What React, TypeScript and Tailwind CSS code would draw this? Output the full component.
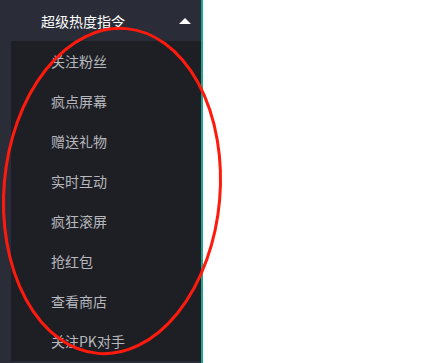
import React from 'react';

const items = ['关注粉丝', '疯点屏幕', '赠送礼物', '实时互动', '疯狂滚屏', '抢红包', '查看商店', '关注PK对手'];

const App: React.FC = () => {
  return (
    <div className="relative w-[444px] h-[363px] bg-white overflow-hidden font-['Noto_Sans_CJK_SC','Liberation_Sans',sans-serif]">
      <div className="flex h-full w-[203px]">
        {/* Sidebar */}
        <div className="flex flex-col w-[201px] h-full bg-[#2a2d37]">
          <div className="flex items-center justify-between h-[41px] pl-[41px] pr-[10px] shrink-0">
            <span className="text-[14px] text-white leading-none">超级热度指令</span>
            <svg width="12" height="6" viewBox="0 0 12 6" className="mr-0">
              <polygon points="6,0 12,6 0,6" fill="#ffffff" />
            </svg>
          </div>
          <div className="ml-[11px] bg-[#1e1f25] flex flex-col">
            {items.map((t) => (
              <div key={t} className="h-[40px] flex items-center pl-[40px] text-[14px] text-[#b6b8bd] leading-none">
                {t}
              </div>
            ))}
          </div>
        </div>
        <div className="w-[2px] h-full bg-[#1fa590]" />
      </div>

      {/* Annotation */}
      <svg className="absolute left-0 top-0 pointer-events-none" width="444" height="363">
        <ellipse
          cx="112"
          cy="191"
          rx="108"
          ry="163"
          transform="rotate(5 112 191)"
          fill="none"
          stroke="#ff1a0e"
          strokeWidth="3"
        />
      </svg>
    </div>
  );
};

export default App;
